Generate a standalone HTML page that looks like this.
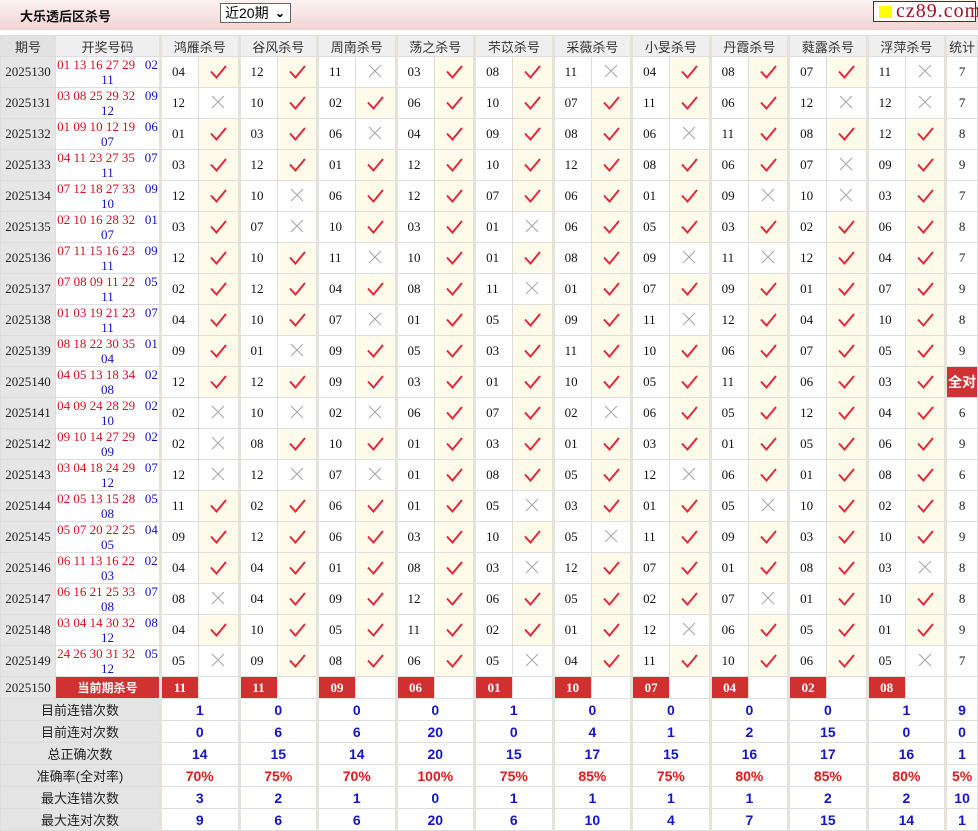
<!DOCTYPE html>
<html><head><meta charset="utf-8">
<style>
*{margin:0;padding:0;box-sizing:border-box}
body{width:978px;height:830px;overflow:hidden;background:#fff;font-family:"Liberation Serif","Noto Serif CJK SC",serif}
.top{position:absolute;left:0;top:0;width:978px;height:30px;background:linear-gradient(#fdf3f3,#f3d2d2)}
.title{position:absolute;left:20px;top:6px;font:bold 13px "Liberation Sans","Noto Sans CJK SC",sans-serif;color:#111}
.sel{position:absolute;left:220px;top:3px;width:71px;height:20px;border:1px solid #666;background:#fff;font:14px "Liberation Sans","Noto Sans CJK SC",sans-serif;padding-left:4px;line-height:18px;color:#000}
.sel b{position:absolute;right:5px;top:0;font-size:12px}
.logo{position:absolute;left:873px;top:1px;width:103px;height:21px;border:1px solid #8b1020;background:#fff;font:20px "Liberation Serif",serif;color:#a01028;line-height:19px;padding-left:22px;letter-spacing:1px}
.logo i{position:absolute;left:5px;top:4px;width:13px;height:12px;background:#ff0}
table{position:absolute;left:0;top:35px;border-collapse:collapse;table-layout:fixed;width:978px}
td,th{border:1px solid #ddd;text-align:center;vertical-align:middle;padding:0;overflow:hidden;white-space:nowrap}
th{height:21px;background:#efefef;font:normal 13px "Liberation Sans","Noto Sans CJK SC",sans-serif;color:#333}
th.p{background:#e2e2e2}
tr.r td{height:31px}
.q{background:#e6e6e6;font-size:13px;color:#222}
.d{font-size:13px;line-height:15px;white-space:normal}
.rd{color:#d0101e}.bl{color:#1010c0}
.n{font-size:13px;color:#111;text-align:left;padding-left:10px}
.g{border-left:3px solid #e4e2da}
.k{background:#fffbea}
.t{font-size:13px;color:#222}
svg.i{width:20px;height:18px;display:block;margin:0 auto}
tr.c td{height:22px}
.cr{background:#d03030;color:#fff;font-weight:bold;font-size:13px}
.cl{background:#d03234;color:#fff;font:bold 14px "Liberation Sans","Noto Sans CJK SC",sans-serif}
tr.s td{height:22px;font:bold 14px "Liberation Sans",sans-serif;color:#1515c8}
tr.s.red td{color:#e01818}
tr.s td.l{background:#e4e4e4;font:13px "Liberation Sans","Noto Sans CJK SC",sans-serif;color:#222}
.qd{background:#d03234;color:#fff;font:bold 12px "Liberation Sans","Noto Sans CJK SC",sans-serif}
</style></head><body>
<svg width="0" height="0" style="position:absolute"><defs>
<symbol id="c" viewBox="0 0 20 18"><path d="M3 8.5 L8.5 14.5 L18 3" fill="none" stroke="#e0283a" stroke-width="2"/></symbol>
<symbol id="x" viewBox="0 0 20 18"><path d="M4 2 L16 14 M16 2 L4 14" fill="none" stroke="#a8a8a8" stroke-width="1.1"/></symbol>
</defs></svg>
<div class="top"></div>
<div class="title">大乐透后区杀号</div>
<div class="sel">近20期<b>&#8964;</b></div>
<div class="logo"><i></i>cz89.com</div>
<table>
<colgroup><col style="width:55px"><col style="width:105px">
<col style="width:38px"><col style="width:40.5px"><col style="width:38px"><col style="width:40.5px"><col style="width:38px"><col style="width:40.5px"><col style="width:38px"><col style="width:40.5px"><col style="width:38px"><col style="width:40.5px"><col style="width:38px"><col style="width:40.5px"><col style="width:38px"><col style="width:40.5px"><col style="width:38px"><col style="width:40.5px"><col style="width:38px"><col style="width:40.5px"><col style="width:38px"><col style="width:40.5px"><col></colgroup>
<tr><th class="p">期号</th><th>开奖号码</th><th colspan="2" class="g">鸿雁杀号</th><th colspan="2" class="g">谷风杀号</th><th colspan="2" class="g">周南杀号</th><th colspan="2" class="g">荡之杀号</th><th colspan="2" class="g">芣苡杀号</th><th colspan="2" class="g">采薇杀号</th><th colspan="2" class="g">小旻杀号</th><th colspan="2" class="g">丹霞杀号</th><th colspan="2" class="g">蕤露杀号</th><th colspan="2" class="g">浮萍杀号</th><th class="g">统计</th></tr>
<tr class="r"><td class="q">2025130</td><td class="d"><span class="rd">01 13 16 27 29</span>&nbsp;&nbsp;&nbsp;<span class="bl">02</span><br><span class="bl">11</span></td><td class="n g">04</td><td class="k"><svg class="i"><use href="#c"/></svg></td><td class="n g">12</td><td class="k"><svg class="i"><use href="#c"/></svg></td><td class="n g">11</td><td><svg class="i"><use href="#x"/></svg></td><td class="n g">03</td><td class="k"><svg class="i"><use href="#c"/></svg></td><td class="n g">08</td><td class="k"><svg class="i"><use href="#c"/></svg></td><td class="n g">11</td><td><svg class="i"><use href="#x"/></svg></td><td class="n g">04</td><td class="k"><svg class="i"><use href="#c"/></svg></td><td class="n g">08</td><td class="k"><svg class="i"><use href="#c"/></svg></td><td class="n g">07</td><td class="k"><svg class="i"><use href="#c"/></svg></td><td class="n g">11</td><td><svg class="i"><use href="#x"/></svg></td><td class="t g">7</td></tr>
<tr class="r"><td class="q">2025131</td><td class="d"><span class="rd">03 08 25 29 32</span>&nbsp;&nbsp;&nbsp;<span class="bl">09</span><br><span class="bl">12</span></td><td class="n g">12</td><td><svg class="i"><use href="#x"/></svg></td><td class="n g">10</td><td class="k"><svg class="i"><use href="#c"/></svg></td><td class="n g">02</td><td class="k"><svg class="i"><use href="#c"/></svg></td><td class="n g">06</td><td class="k"><svg class="i"><use href="#c"/></svg></td><td class="n g">10</td><td class="k"><svg class="i"><use href="#c"/></svg></td><td class="n g">07</td><td class="k"><svg class="i"><use href="#c"/></svg></td><td class="n g">11</td><td class="k"><svg class="i"><use href="#c"/></svg></td><td class="n g">06</td><td class="k"><svg class="i"><use href="#c"/></svg></td><td class="n g">12</td><td><svg class="i"><use href="#x"/></svg></td><td class="n g">12</td><td><svg class="i"><use href="#x"/></svg></td><td class="t g">7</td></tr>
<tr class="r"><td class="q">2025132</td><td class="d"><span class="rd">01 09 10 12 19</span>&nbsp;&nbsp;&nbsp;<span class="bl">06</span><br><span class="bl">07</span></td><td class="n g">01</td><td class="k"><svg class="i"><use href="#c"/></svg></td><td class="n g">03</td><td class="k"><svg class="i"><use href="#c"/></svg></td><td class="n g">06</td><td><svg class="i"><use href="#x"/></svg></td><td class="n g">04</td><td class="k"><svg class="i"><use href="#c"/></svg></td><td class="n g">09</td><td class="k"><svg class="i"><use href="#c"/></svg></td><td class="n g">08</td><td class="k"><svg class="i"><use href="#c"/></svg></td><td class="n g">06</td><td><svg class="i"><use href="#x"/></svg></td><td class="n g">11</td><td class="k"><svg class="i"><use href="#c"/></svg></td><td class="n g">08</td><td class="k"><svg class="i"><use href="#c"/></svg></td><td class="n g">12</td><td class="k"><svg class="i"><use href="#c"/></svg></td><td class="t g">8</td></tr>
<tr class="r"><td class="q">2025133</td><td class="d"><span class="rd">04 11 23 27 35</span>&nbsp;&nbsp;&nbsp;<span class="bl">07</span><br><span class="bl">11</span></td><td class="n g">03</td><td class="k"><svg class="i"><use href="#c"/></svg></td><td class="n g">12</td><td class="k"><svg class="i"><use href="#c"/></svg></td><td class="n g">01</td><td class="k"><svg class="i"><use href="#c"/></svg></td><td class="n g">12</td><td class="k"><svg class="i"><use href="#c"/></svg></td><td class="n g">10</td><td class="k"><svg class="i"><use href="#c"/></svg></td><td class="n g">12</td><td class="k"><svg class="i"><use href="#c"/></svg></td><td class="n g">08</td><td class="k"><svg class="i"><use href="#c"/></svg></td><td class="n g">06</td><td class="k"><svg class="i"><use href="#c"/></svg></td><td class="n g">07</td><td><svg class="i"><use href="#x"/></svg></td><td class="n g">09</td><td class="k"><svg class="i"><use href="#c"/></svg></td><td class="t g">9</td></tr>
<tr class="r"><td class="q">2025134</td><td class="d"><span class="rd">07 12 18 27 33</span>&nbsp;&nbsp;&nbsp;<span class="bl">09</span><br><span class="bl">10</span></td><td class="n g">12</td><td class="k"><svg class="i"><use href="#c"/></svg></td><td class="n g">10</td><td><svg class="i"><use href="#x"/></svg></td><td class="n g">06</td><td class="k"><svg class="i"><use href="#c"/></svg></td><td class="n g">12</td><td class="k"><svg class="i"><use href="#c"/></svg></td><td class="n g">07</td><td class="k"><svg class="i"><use href="#c"/></svg></td><td class="n g">06</td><td class="k"><svg class="i"><use href="#c"/></svg></td><td class="n g">01</td><td class="k"><svg class="i"><use href="#c"/></svg></td><td class="n g">09</td><td><svg class="i"><use href="#x"/></svg></td><td class="n g">10</td><td><svg class="i"><use href="#x"/></svg></td><td class="n g">03</td><td class="k"><svg class="i"><use href="#c"/></svg></td><td class="t g">7</td></tr>
<tr class="r"><td class="q">2025135</td><td class="d"><span class="rd">02 10 16 28 32</span>&nbsp;&nbsp;&nbsp;<span class="bl">01</span><br><span class="bl">07</span></td><td class="n g">03</td><td class="k"><svg class="i"><use href="#c"/></svg></td><td class="n g">07</td><td><svg class="i"><use href="#x"/></svg></td><td class="n g">10</td><td class="k"><svg class="i"><use href="#c"/></svg></td><td class="n g">03</td><td class="k"><svg class="i"><use href="#c"/></svg></td><td class="n g">01</td><td><svg class="i"><use href="#x"/></svg></td><td class="n g">06</td><td class="k"><svg class="i"><use href="#c"/></svg></td><td class="n g">05</td><td class="k"><svg class="i"><use href="#c"/></svg></td><td class="n g">03</td><td class="k"><svg class="i"><use href="#c"/></svg></td><td class="n g">02</td><td class="k"><svg class="i"><use href="#c"/></svg></td><td class="n g">06</td><td class="k"><svg class="i"><use href="#c"/></svg></td><td class="t g">8</td></tr>
<tr class="r"><td class="q">2025136</td><td class="d"><span class="rd">07 11 15 16 23</span>&nbsp;&nbsp;&nbsp;<span class="bl">09</span><br><span class="bl">11</span></td><td class="n g">12</td><td class="k"><svg class="i"><use href="#c"/></svg></td><td class="n g">10</td><td class="k"><svg class="i"><use href="#c"/></svg></td><td class="n g">11</td><td><svg class="i"><use href="#x"/></svg></td><td class="n g">10</td><td class="k"><svg class="i"><use href="#c"/></svg></td><td class="n g">01</td><td class="k"><svg class="i"><use href="#c"/></svg></td><td class="n g">08</td><td class="k"><svg class="i"><use href="#c"/></svg></td><td class="n g">09</td><td><svg class="i"><use href="#x"/></svg></td><td class="n g">11</td><td><svg class="i"><use href="#x"/></svg></td><td class="n g">12</td><td class="k"><svg class="i"><use href="#c"/></svg></td><td class="n g">04</td><td class="k"><svg class="i"><use href="#c"/></svg></td><td class="t g">7</td></tr>
<tr class="r"><td class="q">2025137</td><td class="d"><span class="rd">07 08 09 11 22</span>&nbsp;&nbsp;&nbsp;<span class="bl">05</span><br><span class="bl">11</span></td><td class="n g">02</td><td class="k"><svg class="i"><use href="#c"/></svg></td><td class="n g">12</td><td class="k"><svg class="i"><use href="#c"/></svg></td><td class="n g">04</td><td class="k"><svg class="i"><use href="#c"/></svg></td><td class="n g">08</td><td class="k"><svg class="i"><use href="#c"/></svg></td><td class="n g">11</td><td><svg class="i"><use href="#x"/></svg></td><td class="n g">01</td><td class="k"><svg class="i"><use href="#c"/></svg></td><td class="n g">07</td><td class="k"><svg class="i"><use href="#c"/></svg></td><td class="n g">09</td><td class="k"><svg class="i"><use href="#c"/></svg></td><td class="n g">01</td><td class="k"><svg class="i"><use href="#c"/></svg></td><td class="n g">07</td><td class="k"><svg class="i"><use href="#c"/></svg></td><td class="t g">9</td></tr>
<tr class="r"><td class="q">2025138</td><td class="d"><span class="rd">01 03 19 21 23</span>&nbsp;&nbsp;&nbsp;<span class="bl">07</span><br><span class="bl">11</span></td><td class="n g">04</td><td class="k"><svg class="i"><use href="#c"/></svg></td><td class="n g">10</td><td class="k"><svg class="i"><use href="#c"/></svg></td><td class="n g">07</td><td><svg class="i"><use href="#x"/></svg></td><td class="n g">01</td><td class="k"><svg class="i"><use href="#c"/></svg></td><td class="n g">05</td><td class="k"><svg class="i"><use href="#c"/></svg></td><td class="n g">09</td><td class="k"><svg class="i"><use href="#c"/></svg></td><td class="n g">11</td><td><svg class="i"><use href="#x"/></svg></td><td class="n g">12</td><td class="k"><svg class="i"><use href="#c"/></svg></td><td class="n g">04</td><td class="k"><svg class="i"><use href="#c"/></svg></td><td class="n g">10</td><td class="k"><svg class="i"><use href="#c"/></svg></td><td class="t g">8</td></tr>
<tr class="r"><td class="q">2025139</td><td class="d"><span class="rd">08 18 22 30 35</span>&nbsp;&nbsp;&nbsp;<span class="bl">01</span><br><span class="bl">04</span></td><td class="n g">09</td><td class="k"><svg class="i"><use href="#c"/></svg></td><td class="n g">01</td><td><svg class="i"><use href="#x"/></svg></td><td class="n g">09</td><td class="k"><svg class="i"><use href="#c"/></svg></td><td class="n g">05</td><td class="k"><svg class="i"><use href="#c"/></svg></td><td class="n g">03</td><td class="k"><svg class="i"><use href="#c"/></svg></td><td class="n g">11</td><td class="k"><svg class="i"><use href="#c"/></svg></td><td class="n g">10</td><td class="k"><svg class="i"><use href="#c"/></svg></td><td class="n g">06</td><td class="k"><svg class="i"><use href="#c"/></svg></td><td class="n g">07</td><td class="k"><svg class="i"><use href="#c"/></svg></td><td class="n g">05</td><td class="k"><svg class="i"><use href="#c"/></svg></td><td class="t g">9</td></tr>
<tr class="r"><td class="q">2025140</td><td class="d"><span class="rd">04 05 13 18 34</span>&nbsp;&nbsp;&nbsp;<span class="bl">02</span><br><span class="bl">08</span></td><td class="n g">12</td><td class="k"><svg class="i"><use href="#c"/></svg></td><td class="n g">12</td><td class="k"><svg class="i"><use href="#c"/></svg></td><td class="n g">09</td><td class="k"><svg class="i"><use href="#c"/></svg></td><td class="n g">03</td><td class="k"><svg class="i"><use href="#c"/></svg></td><td class="n g">01</td><td class="k"><svg class="i"><use href="#c"/></svg></td><td class="n g">10</td><td class="k"><svg class="i"><use href="#c"/></svg></td><td class="n g">05</td><td class="k"><svg class="i"><use href="#c"/></svg></td><td class="n g">11</td><td class="k"><svg class="i"><use href="#c"/></svg></td><td class="n g">06</td><td class="k"><svg class="i"><use href="#c"/></svg></td><td class="n g">03</td><td class="k"><svg class="i"><use href="#c"/></svg></td><td class="cl g">全对</td></tr>
<tr class="r"><td class="q">2025141</td><td class="d"><span class="rd">04 09 24 28 29</span>&nbsp;&nbsp;&nbsp;<span class="bl">02</span><br><span class="bl">10</span></td><td class="n g">02</td><td><svg class="i"><use href="#x"/></svg></td><td class="n g">10</td><td><svg class="i"><use href="#x"/></svg></td><td class="n g">02</td><td><svg class="i"><use href="#x"/></svg></td><td class="n g">06</td><td class="k"><svg class="i"><use href="#c"/></svg></td><td class="n g">07</td><td class="k"><svg class="i"><use href="#c"/></svg></td><td class="n g">02</td><td><svg class="i"><use href="#x"/></svg></td><td class="n g">06</td><td class="k"><svg class="i"><use href="#c"/></svg></td><td class="n g">05</td><td class="k"><svg class="i"><use href="#c"/></svg></td><td class="n g">12</td><td class="k"><svg class="i"><use href="#c"/></svg></td><td class="n g">04</td><td class="k"><svg class="i"><use href="#c"/></svg></td><td class="t g">6</td></tr>
<tr class="r"><td class="q">2025142</td><td class="d"><span class="rd">09 10 14 27 29</span>&nbsp;&nbsp;&nbsp;<span class="bl">02</span><br><span class="bl">09</span></td><td class="n g">02</td><td><svg class="i"><use href="#x"/></svg></td><td class="n g">08</td><td class="k"><svg class="i"><use href="#c"/></svg></td><td class="n g">10</td><td class="k"><svg class="i"><use href="#c"/></svg></td><td class="n g">01</td><td class="k"><svg class="i"><use href="#c"/></svg></td><td class="n g">03</td><td class="k"><svg class="i"><use href="#c"/></svg></td><td class="n g">01</td><td class="k"><svg class="i"><use href="#c"/></svg></td><td class="n g">03</td><td class="k"><svg class="i"><use href="#c"/></svg></td><td class="n g">01</td><td class="k"><svg class="i"><use href="#c"/></svg></td><td class="n g">05</td><td class="k"><svg class="i"><use href="#c"/></svg></td><td class="n g">06</td><td class="k"><svg class="i"><use href="#c"/></svg></td><td class="t g">9</td></tr>
<tr class="r"><td class="q">2025143</td><td class="d"><span class="rd">03 04 18 24 29</span>&nbsp;&nbsp;&nbsp;<span class="bl">07</span><br><span class="bl">12</span></td><td class="n g">12</td><td><svg class="i"><use href="#x"/></svg></td><td class="n g">12</td><td><svg class="i"><use href="#x"/></svg></td><td class="n g">07</td><td><svg class="i"><use href="#x"/></svg></td><td class="n g">01</td><td class="k"><svg class="i"><use href="#c"/></svg></td><td class="n g">08</td><td class="k"><svg class="i"><use href="#c"/></svg></td><td class="n g">05</td><td class="k"><svg class="i"><use href="#c"/></svg></td><td class="n g">12</td><td><svg class="i"><use href="#x"/></svg></td><td class="n g">06</td><td class="k"><svg class="i"><use href="#c"/></svg></td><td class="n g">01</td><td class="k"><svg class="i"><use href="#c"/></svg></td><td class="n g">08</td><td class="k"><svg class="i"><use href="#c"/></svg></td><td class="t g">6</td></tr>
<tr class="r"><td class="q">2025144</td><td class="d"><span class="rd">02 05 13 15 28</span>&nbsp;&nbsp;&nbsp;<span class="bl">05</span><br><span class="bl">08</span></td><td class="n g">11</td><td class="k"><svg class="i"><use href="#c"/></svg></td><td class="n g">02</td><td class="k"><svg class="i"><use href="#c"/></svg></td><td class="n g">06</td><td class="k"><svg class="i"><use href="#c"/></svg></td><td class="n g">01</td><td class="k"><svg class="i"><use href="#c"/></svg></td><td class="n g">05</td><td><svg class="i"><use href="#x"/></svg></td><td class="n g">03</td><td class="k"><svg class="i"><use href="#c"/></svg></td><td class="n g">01</td><td class="k"><svg class="i"><use href="#c"/></svg></td><td class="n g">05</td><td><svg class="i"><use href="#x"/></svg></td><td class="n g">10</td><td class="k"><svg class="i"><use href="#c"/></svg></td><td class="n g">02</td><td class="k"><svg class="i"><use href="#c"/></svg></td><td class="t g">8</td></tr>
<tr class="r"><td class="q">2025145</td><td class="d"><span class="rd">05 07 20 22 25</span>&nbsp;&nbsp;&nbsp;<span class="bl">04</span><br><span class="bl">05</span></td><td class="n g">09</td><td class="k"><svg class="i"><use href="#c"/></svg></td><td class="n g">12</td><td class="k"><svg class="i"><use href="#c"/></svg></td><td class="n g">06</td><td class="k"><svg class="i"><use href="#c"/></svg></td><td class="n g">03</td><td class="k"><svg class="i"><use href="#c"/></svg></td><td class="n g">10</td><td class="k"><svg class="i"><use href="#c"/></svg></td><td class="n g">05</td><td><svg class="i"><use href="#x"/></svg></td><td class="n g">11</td><td class="k"><svg class="i"><use href="#c"/></svg></td><td class="n g">09</td><td class="k"><svg class="i"><use href="#c"/></svg></td><td class="n g">03</td><td class="k"><svg class="i"><use href="#c"/></svg></td><td class="n g">10</td><td class="k"><svg class="i"><use href="#c"/></svg></td><td class="t g">9</td></tr>
<tr class="r"><td class="q">2025146</td><td class="d"><span class="rd">06 11 13 16 22</span>&nbsp;&nbsp;&nbsp;<span class="bl">02</span><br><span class="bl">03</span></td><td class="n g">04</td><td class="k"><svg class="i"><use href="#c"/></svg></td><td class="n g">04</td><td class="k"><svg class="i"><use href="#c"/></svg></td><td class="n g">01</td><td class="k"><svg class="i"><use href="#c"/></svg></td><td class="n g">08</td><td class="k"><svg class="i"><use href="#c"/></svg></td><td class="n g">03</td><td><svg class="i"><use href="#x"/></svg></td><td class="n g">12</td><td class="k"><svg class="i"><use href="#c"/></svg></td><td class="n g">07</td><td class="k"><svg class="i"><use href="#c"/></svg></td><td class="n g">01</td><td class="k"><svg class="i"><use href="#c"/></svg></td><td class="n g">08</td><td class="k"><svg class="i"><use href="#c"/></svg></td><td class="n g">03</td><td><svg class="i"><use href="#x"/></svg></td><td class="t g">8</td></tr>
<tr class="r"><td class="q">2025147</td><td class="d"><span class="rd">06 16 21 25 33</span>&nbsp;&nbsp;&nbsp;<span class="bl">07</span><br><span class="bl">08</span></td><td class="n g">08</td><td><svg class="i"><use href="#x"/></svg></td><td class="n g">04</td><td class="k"><svg class="i"><use href="#c"/></svg></td><td class="n g">09</td><td class="k"><svg class="i"><use href="#c"/></svg></td><td class="n g">12</td><td class="k"><svg class="i"><use href="#c"/></svg></td><td class="n g">06</td><td class="k"><svg class="i"><use href="#c"/></svg></td><td class="n g">05</td><td class="k"><svg class="i"><use href="#c"/></svg></td><td class="n g">02</td><td class="k"><svg class="i"><use href="#c"/></svg></td><td class="n g">07</td><td><svg class="i"><use href="#x"/></svg></td><td class="n g">01</td><td class="k"><svg class="i"><use href="#c"/></svg></td><td class="n g">10</td><td class="k"><svg class="i"><use href="#c"/></svg></td><td class="t g">8</td></tr>
<tr class="r"><td class="q">2025148</td><td class="d"><span class="rd">03 04 14 30 32</span>&nbsp;&nbsp;&nbsp;<span class="bl">08</span><br><span class="bl">12</span></td><td class="n g">04</td><td class="k"><svg class="i"><use href="#c"/></svg></td><td class="n g">10</td><td class="k"><svg class="i"><use href="#c"/></svg></td><td class="n g">05</td><td class="k"><svg class="i"><use href="#c"/></svg></td><td class="n g">11</td><td class="k"><svg class="i"><use href="#c"/></svg></td><td class="n g">02</td><td class="k"><svg class="i"><use href="#c"/></svg></td><td class="n g">01</td><td class="k"><svg class="i"><use href="#c"/></svg></td><td class="n g">12</td><td><svg class="i"><use href="#x"/></svg></td><td class="n g">06</td><td class="k"><svg class="i"><use href="#c"/></svg></td><td class="n g">05</td><td class="k"><svg class="i"><use href="#c"/></svg></td><td class="n g">01</td><td class="k"><svg class="i"><use href="#c"/></svg></td><td class="t g">9</td></tr>
<tr class="r"><td class="q">2025149</td><td class="d"><span class="rd">24 26 30 31 32</span>&nbsp;&nbsp;&nbsp;<span class="bl">05</span><br><span class="bl">12</span></td><td class="n g">05</td><td><svg class="i"><use href="#x"/></svg></td><td class="n g">09</td><td class="k"><svg class="i"><use href="#c"/></svg></td><td class="n g">08</td><td class="k"><svg class="i"><use href="#c"/></svg></td><td class="n g">06</td><td class="k"><svg class="i"><use href="#c"/></svg></td><td class="n g">05</td><td><svg class="i"><use href="#x"/></svg></td><td class="n g">04</td><td class="k"><svg class="i"><use href="#c"/></svg></td><td class="n g">11</td><td class="k"><svg class="i"><use href="#c"/></svg></td><td class="n g">10</td><td class="k"><svg class="i"><use href="#c"/></svg></td><td class="n g">06</td><td class="k"><svg class="i"><use href="#c"/></svg></td><td class="n g">05</td><td><svg class="i"><use href="#x"/></svg></td><td class="t g">7</td></tr>
<tr class="c"><td class="q">2025150</td><td class="qd">当前期杀号</td><td class="cr g">11</td><td></td><td class="cr g">11</td><td></td><td class="cr g">09</td><td></td><td class="cr g">06</td><td></td><td class="cr g">01</td><td></td><td class="cr g">10</td><td></td><td class="cr g">07</td><td></td><td class="cr g">04</td><td></td><td class="cr g">02</td><td></td><td class="cr g">08</td><td></td><td class="g"></td></tr>
<tr class="s"><td class="l" colspan="2">目前连错次数</td><td colspan="2" class="g">1</td><td colspan="2" class="g">0</td><td colspan="2" class="g">0</td><td colspan="2" class="g">0</td><td colspan="2" class="g">1</td><td colspan="2" class="g">0</td><td colspan="2" class="g">0</td><td colspan="2" class="g">0</td><td colspan="2" class="g">0</td><td colspan="2" class="g">1</td><td class="g">9</td></tr>
<tr class="s"><td class="l" colspan="2">目前连对次数</td><td colspan="2" class="g">0</td><td colspan="2" class="g">6</td><td colspan="2" class="g">6</td><td colspan="2" class="g">20</td><td colspan="2" class="g">0</td><td colspan="2" class="g">4</td><td colspan="2" class="g">1</td><td colspan="2" class="g">2</td><td colspan="2" class="g">15</td><td colspan="2" class="g">0</td><td class="g">0</td></tr>
<tr class="s"><td class="l" colspan="2">总正确次数</td><td colspan="2" class="g">14</td><td colspan="2" class="g">15</td><td colspan="2" class="g">14</td><td colspan="2" class="g">20</td><td colspan="2" class="g">15</td><td colspan="2" class="g">17</td><td colspan="2" class="g">15</td><td colspan="2" class="g">16</td><td colspan="2" class="g">17</td><td colspan="2" class="g">16</td><td class="g">1</td></tr>
<tr class="s red"><td class="l" colspan="2">准确率(全对率)</td><td colspan="2" class="g">70%</td><td colspan="2" class="g">75%</td><td colspan="2" class="g">70%</td><td colspan="2" class="g">100%</td><td colspan="2" class="g">75%</td><td colspan="2" class="g">85%</td><td colspan="2" class="g">75%</td><td colspan="2" class="g">80%</td><td colspan="2" class="g">85%</td><td colspan="2" class="g">80%</td><td class="g">5%</td></tr>
<tr class="s"><td class="l" colspan="2">最大连错次数</td><td colspan="2" class="g">3</td><td colspan="2" class="g">2</td><td colspan="2" class="g">1</td><td colspan="2" class="g">0</td><td colspan="2" class="g">1</td><td colspan="2" class="g">1</td><td colspan="2" class="g">1</td><td colspan="2" class="g">1</td><td colspan="2" class="g">2</td><td colspan="2" class="g">2</td><td class="g">10</td></tr>
<tr class="s"><td class="l" colspan="2">最大连对次数</td><td colspan="2" class="g">9</td><td colspan="2" class="g">6</td><td colspan="2" class="g">6</td><td colspan="2" class="g">20</td><td colspan="2" class="g">6</td><td colspan="2" class="g">10</td><td colspan="2" class="g">4</td><td colspan="2" class="g">7</td><td colspan="2" class="g">15</td><td colspan="2" class="g">14</td><td class="g">1</td></tr>
</table>
</body></html>
